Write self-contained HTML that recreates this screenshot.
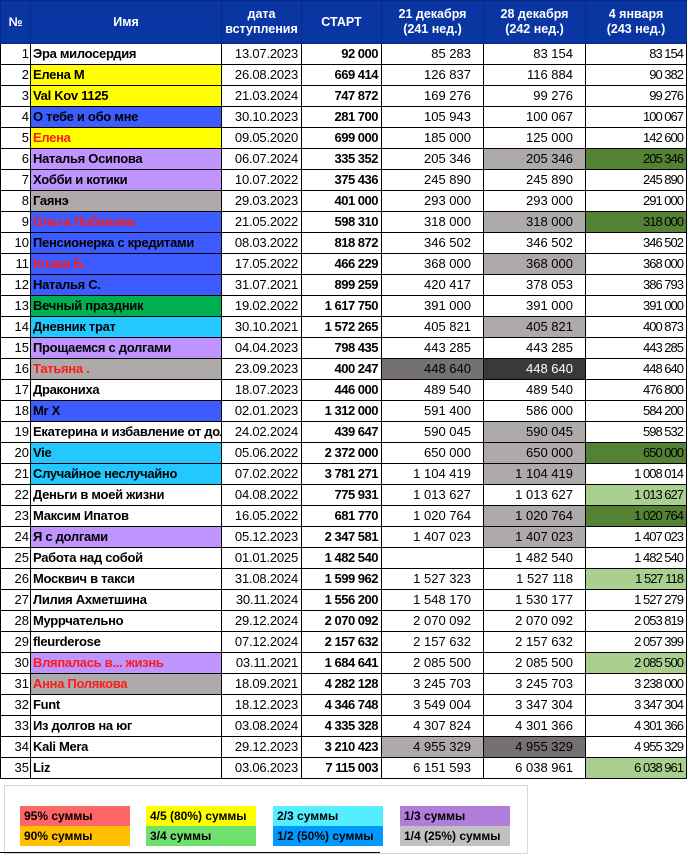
<!DOCTYPE html>
<html><head><meta charset="utf-8">
<style>
body{margin:0;width:688px;height:863px;background:#fff;position:relative;overflow:hidden;font-family:"Liberation Sans","DejaVu Sans",sans-serif;}
table{position:absolute;left:0;top:0;border-collapse:collapse;table-layout:fixed;width:686px;}
td,th{border:1px solid #000;padding:0 3px;white-space:nowrap;overflow:hidden;font-size:13px;height:20px;line-height:20px;box-sizing:border-box;}
th{background:#0a36a4;color:#fff;font-weight:bold;height:43px;line-height:15px;font-size:12.5px;text-align:center;border-color:#0a2a80;}
td.n{text-align:right;padding-right:1px;}
td.nm{font-weight:bold;letter-spacing:-0.3px;padding-left:2px;}
td.d{text-align:right;letter-spacing:-0.2px;}
td.s{text-align:right;font-weight:bold;letter-spacing:-0.5px;}
td.a,td.b{text-align:right;padding-right:12px;}
td.c{text-align:right;letter-spacing:-1px;font-size:13px;}
.r{color:#ff1a1a}
.Y{background:#ffff00}.B{background:#3d5cff}.L{background:#bf94ff}.G{background:#aeaaaa}.N{background:#00b050}.C{background:#22c8ff}
.dg{background:#548235}.lg{background:#a9d08e}.gr{background:#aeaaaa}.dk{background:#767171}.bk{background:#3a3838;color:#fff}
.leg{position:absolute;font-size:12px;font-weight:bold;height:20px;line-height:20px;width:110px;padding-left:4px;box-sizing:border-box;}
</style></head><body>
<table>
<colgroup><col style="width:30px"><col style="width:191px"><col style="width:80px"><col style="width:80px"><col style="width:102px"><col style="width:102px"><col style="width:101px"></colgroup>
<tr><th>№</th><th>Имя</th><th>дата<br>вступления</th><th>СТАРТ</th><th>21 декабря<br>(241 нед.)</th><th>28 декабря<br>(242 нед.)</th><th>4 января<br>(243 нед.)</th></tr>
<tr><td class="n">1</td><td class="nm">Эра милосердия</td><td class="d">13.07.2023</td><td class="s">92 000</td><td class="a">85 283</td><td class="b">83 154</td><td class="c">83 154</td></tr>
<tr><td class="n">2</td><td class="nm Y">Елена М</td><td class="d">26.08.2023</td><td class="s">669 414</td><td class="a">126 837</td><td class="b">116 884</td><td class="c">90 382</td></tr>
<tr><td class="n">3</td><td class="nm Y">Val Kov 1125</td><td class="d">21.03.2024</td><td class="s">747 872</td><td class="a">169 276</td><td class="b">99 276</td><td class="c">99 276</td></tr>
<tr><td class="n">4</td><td class="nm B">О тебе и обо мне</td><td class="d">30.10.2023</td><td class="s">281 700</td><td class="a">105 943</td><td class="b">100 067</td><td class="c">100 067</td></tr>
<tr><td class="n">5</td><td class="nm Y r">Елена</td><td class="d">09.05.2020</td><td class="s">699 000</td><td class="a">185 000</td><td class="b">125 000</td><td class="c">142 600</td></tr>
<tr><td class="n">6</td><td class="nm L">Наталья Осипова</td><td class="d">06.07.2024</td><td class="s">335 352</td><td class="a">205 346</td><td class="b gr">205 346</td><td class="c dg">205 346</td></tr>
<tr><td class="n">7</td><td class="nm L">Хобби и котики</td><td class="d">10.07.2022</td><td class="s">375 436</td><td class="a">245 890</td><td class="b">245 890</td><td class="c">245 890</td></tr>
<tr><td class="n">8</td><td class="nm G">Гаянэ</td><td class="d">29.03.2023</td><td class="s">401 000</td><td class="a">293 000</td><td class="b">293 000</td><td class="c">291 000</td></tr>
<tr><td class="n">9</td><td class="nm B r">Ольга Лобанова</td><td class="d">21.05.2022</td><td class="s">598 310</td><td class="a">318 000</td><td class="b gr">318 000</td><td class="c dg">318 000</td></tr>
<tr><td class="n">10</td><td class="nm B">Пенсионерка с кредитами</td><td class="d">08.03.2022</td><td class="s">818 872</td><td class="a">346 502</td><td class="b">346 502</td><td class="c">346 502</td></tr>
<tr><td class="n">11</td><td class="nm B r">Клава Б.</td><td class="d">17.05.2022</td><td class="s">466 229</td><td class="a">368 000</td><td class="b gr">368 000</td><td class="c">368 000</td></tr>
<tr><td class="n">12</td><td class="nm B">Наталья С.</td><td class="d">31.07.2021</td><td class="s">899 259</td><td class="a">420 417</td><td class="b">378 053</td><td class="c">386 793</td></tr>
<tr><td class="n">13</td><td class="nm N">Вечный праздник</td><td class="d">19.02.2022</td><td class="s">1 617 750</td><td class="a">391 000</td><td class="b">391 000</td><td class="c">391 000</td></tr>
<tr><td class="n">14</td><td class="nm C">Дневник трат</td><td class="d">30.10.2021</td><td class="s">1 572 265</td><td class="a">405 821</td><td class="b gr">405 821</td><td class="c">400 873</td></tr>
<tr><td class="n">15</td><td class="nm L">Прощаемся с долгами</td><td class="d">04.04.2023</td><td class="s">798 435</td><td class="a">443 285</td><td class="b">443 285</td><td class="c">443 285</td></tr>
<tr><td class="n">16</td><td class="nm G r">Татьяна .</td><td class="d">23.09.2023</td><td class="s">400 247</td><td class="a dk">448 640</td><td class="b bk">448 640</td><td class="c">448 640</td></tr>
<tr><td class="n">17</td><td class="nm">Дракониха</td><td class="d">18.07.2023</td><td class="s">446 000</td><td class="a">489 540</td><td class="b">489 540</td><td class="c">476 800</td></tr>
<tr><td class="n">18</td><td class="nm B">Mr X</td><td class="d">02.01.2023</td><td class="s">1 312 000</td><td class="a">591 400</td><td class="b">586 000</td><td class="c">584 200</td></tr>
<tr><td class="n">19</td><td class="nm" style="text-overflow:clip">Екатерина и избавление от долгов</td><td class="d">24.02.2024</td><td class="s">439 647</td><td class="a">590 045</td><td class="b gr">590 045</td><td class="c">598 532</td></tr>
<tr><td class="n">20</td><td class="nm C">Vie</td><td class="d">05.06.2022</td><td class="s">2 372 000</td><td class="a">650 000</td><td class="b gr">650 000</td><td class="c dg">650 000</td></tr>
<tr><td class="n">21</td><td class="nm C">Случайное неслучайно</td><td class="d">07.02.2022</td><td class="s">3 781 271</td><td class="a">1 104 419</td><td class="b gr">1 104 419</td><td class="c">1 008 014</td></tr>
<tr><td class="n">22</td><td class="nm">Деньги в моей жизни</td><td class="d">04.08.2022</td><td class="s">775 931</td><td class="a">1 013 627</td><td class="b">1 013 627</td><td class="c lg">1 013 627</td></tr>
<tr><td class="n">23</td><td class="nm">Максим Ипатов</td><td class="d">16.05.2022</td><td class="s">681 770</td><td class="a">1 020 764</td><td class="b gr">1 020 764</td><td class="c dg">1 020 764</td></tr>
<tr><td class="n">24</td><td class="nm L">Я с долгами</td><td class="d">05.12.2023</td><td class="s">2 347 581</td><td class="a">1 407 023</td><td class="b gr">1 407 023</td><td class="c">1 407 023</td></tr>
<tr><td class="n">25</td><td class="nm">Работа над собой</td><td class="d">01.01.2025</td><td class="s">1 482 540</td><td class="a"></td><td class="b">1 482 540</td><td class="c">1 482 540</td></tr>
<tr><td class="n">26</td><td class="nm">Москвич в такси</td><td class="d">31.08.2024</td><td class="s">1 599 962</td><td class="a">1 527 323</td><td class="b">1 527 118</td><td class="c lg">1 527 118</td></tr>
<tr><td class="n">27</td><td class="nm">Лилия Ахметшина</td><td class="d">30.11.2024</td><td class="s">1 556 200</td><td class="a">1 548 170</td><td class="b">1 530 177</td><td class="c">1 527 279</td></tr>
<tr><td class="n">28</td><td class="nm">Муррчательно</td><td class="d">29.12.2024</td><td class="s">2 070 092</td><td class="a">2 070 092</td><td class="b">2 070 092</td><td class="c">2 053 819</td></tr>
<tr><td class="n">29</td><td class="nm">fleurderose</td><td class="d">07.12.2024</td><td class="s">2 157 632</td><td class="a">2 157 632</td><td class="b">2 157 632</td><td class="c">2 057 399</td></tr>
<tr><td class="n">30</td><td class="nm L r">Вляпалась в... жизнь</td><td class="d">03.11.2021</td><td class="s">1 684 641</td><td class="a">2 085 500</td><td class="b">2 085 500</td><td class="c lg">2 085 500</td></tr>
<tr><td class="n">31</td><td class="nm G r">Анна Полякова</td><td class="d">18.09.2021</td><td class="s">4 282 128</td><td class="a">3 245 703</td><td class="b">3 245 703</td><td class="c">3 238 000</td></tr>
<tr><td class="n">32</td><td class="nm">Funt</td><td class="d">18.12.2023</td><td class="s">4 346 748</td><td class="a">3 549 004</td><td class="b">3 347 304</td><td class="c">3 347 304</td></tr>
<tr><td class="n">33</td><td class="nm">Из долгов на юг</td><td class="d">03.08.2024</td><td class="s">4 335 328</td><td class="a">4 307 824</td><td class="b">4 301 366</td><td class="c">4 301 366</td></tr>
<tr><td class="n">34</td><td class="nm">Kali Mera</td><td class="d">29.12.2023</td><td class="s">3 210 423</td><td class="a gr">4 955 329</td><td class="b dk">4 955 329</td><td class="c">4 955 329</td></tr>
<tr><td class="n">35</td><td class="nm">Liz</td><td class="d">03.06.2023</td><td class="s">7 115 003</td><td class="a">6 151 593</td><td class="b">6 038 961</td><td class="c lg">6 038 961</td></tr>
</table>
<div style="position:absolute;left:4px;top:785px;width:522px;height:67px;border:1px solid #d8d8d8;"></div>
<div style="position:absolute;left:0;top:852px;width:380px;height:1px;background:#000"></div>
<div class="leg" style="left:20px;top:806px;background:#ff6666">95% суммы</div>
<div class="leg" style="left:20px;top:826px;background:#ffc000">90% суммы</div>
<div class="leg" style="left:146px;top:806px;background:#ffff00">4/5 (80%) суммы</div>
<div class="leg" style="left:146px;top:826px;background:#6ee06e">3/4 суммы</div>
<div class="leg" style="left:273px;top:806px;background:#55eeff">2/3 суммы</div>
<div class="leg" style="left:273px;top:826px;background:#0099ff">1/2 (50%) суммы</div>
<div class="leg" style="left:400px;top:806px;background:#b07ddb">1/3 суммы</div>
<div class="leg" style="left:400px;top:826px;background:#c0c0c0">1/4 (25%) суммы</div>
</body></html>
